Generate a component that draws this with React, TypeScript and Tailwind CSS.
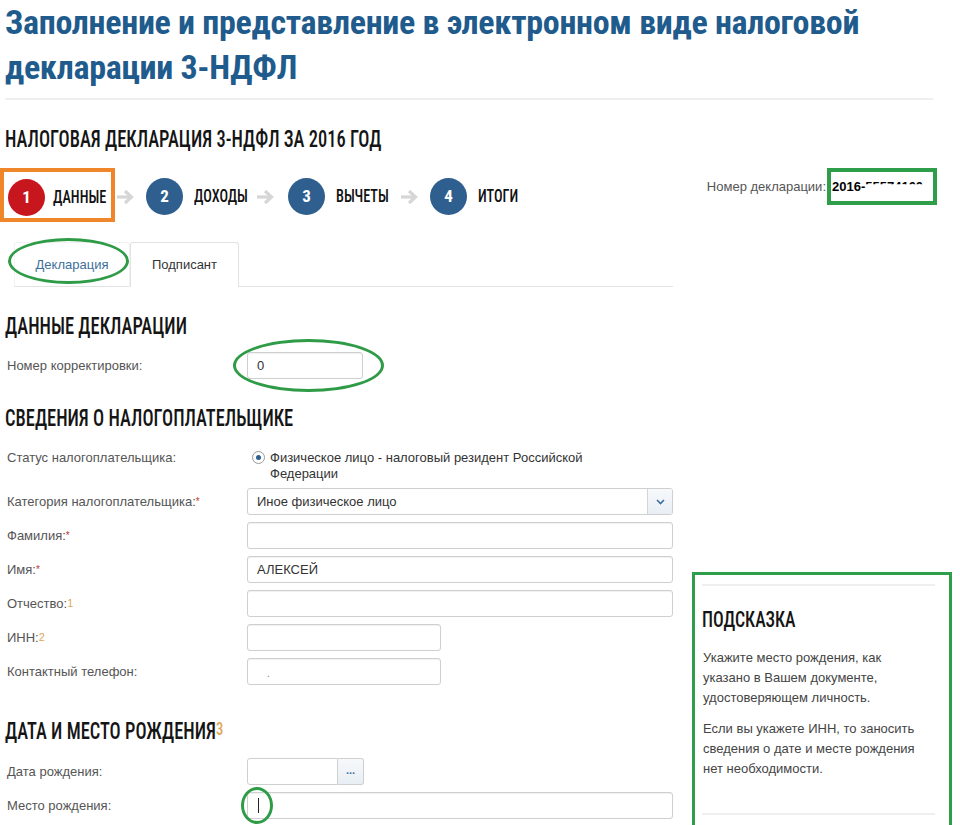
import React from "react";

const cond = "font-['Roboto_Condensed','DejaVu_Sans_Condensed',sans-serif]";

function Arrow() {
  return (
    <svg width="18" height="16" viewBox="0 0 18 16" className="shrink-0">
      <path d="M1 8 H15" stroke="#d6d6d6" strokeWidth="3.2" fill="none" />
      <path d="M9 2 L15.5 8 L9 14" stroke="#d6d6d6" strokeWidth="3.2" fill="none" />
    </svg>
  );
}

function Circle({ n, red }: { n: number; red?: boolean }) {
  return (
    <div
      className={`w-[37px] h-[37px] shrink-0 rounded-full flex items-center justify-center text-white text-[17px] font-bold ${cond} ${
        red ? "bg-[#c8161f]" : "bg-[#2f5f8f]"
      }`}
    >
      {n}
    </div>
  );
}

function StepLabel({ text, w, ml = "ml-[11px]" }: { text: string; w: string; ml?: string }) {
  return (
    <div className={`${ml} ${w} shrink-0`}>
      <span className={`block whitespace-nowrap origin-left scale-x-[0.75] text-[19px] font-medium text-[#111] ${cond}`}>{text}</span>
    </div>
  );
}

function Heading({ children, mt }: { children: React.ReactNode; mt: string }) {
  return (
    <h3 className={`${mt} whitespace-nowrap origin-left scale-x-[0.77] text-[24px] leading-[28px] font-medium text-[#151515] ${cond}`}>
      {children}
    </h3>
  );
}

function Input({ w, children }: { w?: string; children?: React.ReactNode }) {
  return (
    <div
      className={`h-[27px] border border-[#cfcfcf] rounded-[3px] bg-white shadow-[inset_0_1px_1px_rgba(0,0,0,0.06)] flex items-center pl-[9px] text-[13px] text-[#333] ${
        w ?? "w-[426px]"
      }`}
    >
      {children}
    </div>
  );
}

function Row({ label, children, mt = "mt-[7px]" }: { label: React.ReactNode; children: React.ReactNode; mt?: string }) {
  return (
    <div className={`flex items-center ${mt}`}>
      <div className="w-[240px] shrink-0 text-[13px] text-[#555]">{label}</div>
      {children}
    </div>
  );
}

const Star = () => <sup className="text-[#c0392b] text-[10px] relative top-[-1px]">*</sup>;
const Num = ({ n }: { n: number }) => <sup className="text-[#e0a85a] text-[11px] relative top-[-1px]">{n}</sup>;

export default function App() {
  return (
    <div className="relative w-[960px] h-[825px] overflow-hidden bg-white font-['Liberation_Sans',Arial,sans-serif] text-[13px] text-[#555]">
      {/* Title */}
      <div className="pl-[5px] pr-[27px]">
        <h1 className={`text-[34px] leading-[45px] font-bold text-[#1f5b8c] tracking-[-0.3px] whitespace-nowrap ${cond}`}>
          Заполнение и представление в электронном виде налоговой
          <br />
          декларации 3-НДФЛ
        </h1>
        <div className="mt-[8px] h-[2px] bg-[#efefef]" />
      </div>

      <div className="pl-[5px]">
        <Heading mt="mt-[25px]">НАЛОГОВАЯ ДЕКЛАРАЦИЯ 3-НДФЛ ЗА 2016 ГОД</Heading>
      </div>

      {/* Steps */}
      <div className="mt-[15px] flex items-start justify-between pr-[23px]">
        <div className="flex items-start">
          <div className="h-[54px] w-[115px] border-[4px] border-[#f0862a] flex items-center pl-[4px] pt-[5px]">
            <Circle n={1} red />
            <StepLabel text="ДАННЫЕ" w="w-[52px]" ml="ml-[8px]" />
          </div>
          <div className="flex items-center pt-[10px]">
            <div className="ml-[1px] mr-[12px]"><Arrow /></div>
            <Circle n={2} />
            <StepLabel text="ДОХОДЫ" w="w-[54px]" />
            <div className="ml-[8px] mr-[14px]"><Arrow /></div>
            <Circle n={3} />
            <StepLabel text="ВЫЧЕТЫ" w="w-[54px]" />
            <div className="ml-[10px] mr-[12px]"><Arrow /></div>
            <Circle n={4} />
            <StepLabel text="ИТОГИ" w="w-[40px]" />
          </div>
        </div>
        <div className="flex items-center">
          <span className="text-[13px] text-[#555] mr-[1px]">Номер декларации:</span>
          <div className="h-[37px] w-[110px] border-[4px] border-[#2f9e4b] flex items-center pl-[1px] overflow-hidden whitespace-nowrap">
            <span className="text-[13px] font-bold text-black">2016-</span>
            <span className="inline-block text-[13px] font-bold text-black [clip-path:inset(0_0_62%_0)]">55574100</span>
          </div>
        </div>
      </div>

      {/* Main area */}
      <div className="mt-[20px] flex">
        <div className="w-[673px] shrink-0">
          {/* Tabs */}
          <div className="ml-[14px] h-[45px] border-b border-[#e2e2e2] flex">
            <div className="relative w-[116px] h-[45px] border border-b-0 border-[#f2f2f2] rounded-t-[3px] flex items-center justify-center text-[13px] text-[#3e6f9b]">
              Декларация
              <div className="absolute left-[-7px] top-[-5px] w-[121px] h-[46px] rounded-[50%] border-[3px] border-[#2e9b47]" />
            </div>
            <div className="w-[109px] h-[45px] border border-b-0 border-[#e2e2e2] rounded-t-[3px] flex items-center justify-center text-[13px] text-[#333] bg-white">
              Подписант
            </div>
          </div>

          <div className="pl-[5px]">
            <Heading mt="mt-[25px]">ДАННЫЕ ДЕКЛАРАЦИИ</Heading>
          </div>
          <div className="pl-[7px]">
            <Row label="Номер корректировки:" mt="mt-[12px]">
              <div className="relative">
                <Input w="w-[116px]">0</Input>
                <div className="absolute left-[-14px] top-[-13px] w-[151px] h-[53px] rounded-[50%] border-[3px] border-[#2e9b47]" />
              </div>
            </Row>
          </div>

          <div className="pl-[5px]">
            <Heading mt="mt-[25px]">СВЕДЕНИЯ О НАЛОГОПЛАТЕЛЬЩИКЕ</Heading>
          </div>
          <div className="pl-[7px]">
            <div className="mt-[18px] flex items-start">
              <div className="w-[240px] shrink-0 text-[13px] leading-[16px] text-[#555]">Статус налогоплательщика:</div>
              <div className="flex items-start">
                <div className="mt-[1px] ml-[5px] w-[13px] h-[13px] rounded-full border border-[#9a9a9a] bg-white flex items-center justify-center">
                  <div className="w-[5px] h-[5px] rounded-full bg-[#2f5f8f]" />
                </div>
                <div className="ml-[5px] text-[13px] leading-[16px] text-[#333]">
                  Физическое лицо - налоговый резидент Российской
                  <br />
                  Федерации
                </div>
              </div>
            </div>

            <Row label={<>Категория налогоплательщика:<Star /></>} mt="mt-[6px]">
              <div className="w-[426px] h-[27px] border border-[#cfcfcf] rounded-[3px] flex items-stretch overflow-hidden">
                <div className="flex-1 flex items-center pl-[9px] text-[13px] text-[#333]">Иное физическое лицо</div>
                <div className="w-[25px] border-l border-[#d5d5d5] bg-gradient-to-b from-[#f7f9fb] to-[#e8eef4] flex items-center justify-center">
                  <svg width="9" height="6" viewBox="0 0 9 6">
                    <path d="M1 1 L4.5 4.5 L8 1" stroke="#3b6ea3" strokeWidth="1.6" fill="none" />
                  </svg>
                </div>
              </div>
            </Row>

            <Row label={<>Фамилия:<Star /></>}>
              <Input />
            </Row>
            <Row label={<>Имя:<Star /></>}>
              <Input>АЛЕКСЕЙ</Input>
            </Row>
            <Row label={<>Отчество:<Num n={1} /></>}>
              <Input />
            </Row>
            <Row label={<>ИНН:<Num n={2} /></>}>
              <Input w="w-[194px]" />
            </Row>
            <Row label="Контактный телефон:">
              <Input w="w-[194px]">
                <span className="ml-[10px] text-[#777] text-[10px] leading-none mt-[4px]">.</span>
              </Input>
            </Row>
          </div>

          <div className="pl-[5px]">
            <Heading mt="mt-[32px]">
              ДАТА И МЕСТО РОЖДЕНИЯ<sup className="text-[#e0a85a] text-[19px] relative top-[-4px]">3</sup>
            </Heading>
          </div>
          <div className="pl-[7px]">
            <Row label="Дата рождения:" mt="mt-[13px]">
              <div className="flex h-[27px]">
                <div className="w-[91px] border border-[#cfcfcf] rounded-l-[3px] bg-white" />
                <div className="w-[26px] border border-l-0 border-[#cfcfcf] rounded-r-[3px] bg-gradient-to-b from-[#f7f9fb] to-[#e8eef4] flex items-center justify-center text-[#3b6ea3] text-[11px] font-bold leading-none pb-[2px]">
                  ...
                </div>
              </div>
            </Row>
            <Row label="Место рождения:">
              <div className="relative">
                <Input>
                  <span className="ml-[1px] w-[1px] h-[15px] bg-[#222]" />
                </Input>
                <div className="absolute left-[-6px] top-[-5px] w-[32px] h-[37px] rounded-[50%] border-[3px] border-[#2e9b47]" />
              </div>
            </Row>
          </div>
        </div>

        {/* Hint */}
        <div className="ml-[19px] mt-[330px] w-[260px] h-[260px] shrink-0 border-[3px] border-[#2f9e4b] pl-[7px] pr-[14px] pt-[9px]">
          <div className="h-[2px] bg-[#efefef]" />
          <h4 className={`mt-[21px] whitespace-nowrap origin-left scale-x-[0.81] text-[22px] leading-[26px] font-medium text-[#151515] ${cond}`}>ПОДСКАЗКА</h4>
          <p className="mt-[15px] pl-[1px] text-[13px] leading-[20px] text-[#444]">
            Укажите место рождения, как
            <br />
            указано в Вашем документе,
            <br />
            удостоверяющем личность.
          </p>
          <p className="mt-[11px] pl-[1px] text-[13px] leading-[20px] text-[#444]">
            Если вы укажете ИНН, то заносить
            <br />
            сведения о дате и месте рождения
            <br />
            нет необходимости.
          </p>
          <div className="mt-[34px] h-[2px] bg-[#efefef]" />
        </div>
      </div>
    </div>
  );
}
